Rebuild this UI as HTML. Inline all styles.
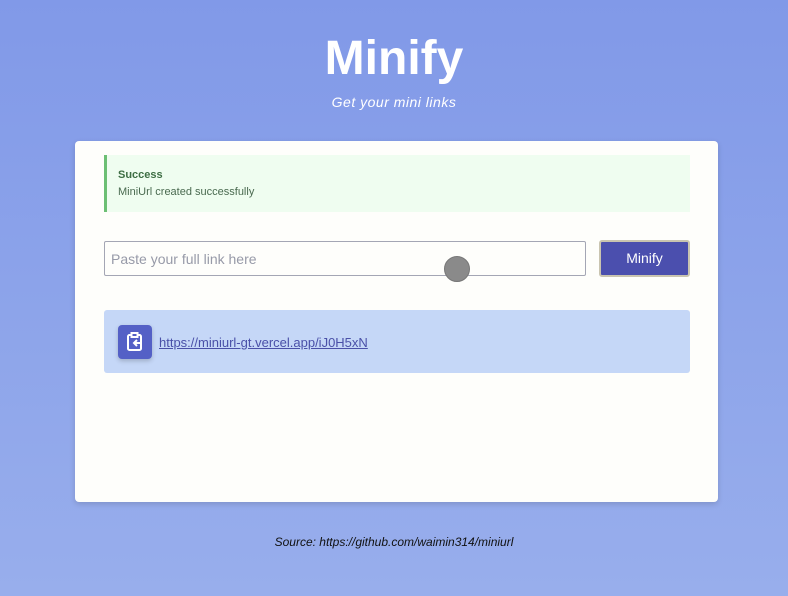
<!DOCTYPE html>
<html><head><style>
*{margin:0;padding:0;box-sizing:border-box}
body{width:788px;height:596px;overflow:hidden;background:linear-gradient(#8199e8,#98aeec);font-family:"Liberation Sans",sans-serif;position:relative}
h1{position:absolute;top:31px;width:100%;text-align:center;color:#fff;font-size:48px;font-weight:bold;letter-spacing:0}
.sub{position:absolute;top:94px;width:100%;text-align:center;color:#fff;font-style:italic;font-size:14px;letter-spacing:.5px}
.card{position:absolute;left:75px;top:141px;width:643px;height:361px;background:#fefefb;border-radius:4px;box-shadow:0 2px 6px rgba(0,0,0,.15)}
.alert{position:absolute;left:29px;top:14px;width:586px;height:57px;background:#effdf0;border-left:3px solid #6cbf74}
.alert b{position:absolute;left:11px;top:14px;font-size:11px;color:#3e6e44}
.alert span{position:absolute;left:11px;top:31px;font-size:11px;color:#4a6a50}
.inp{position:absolute;left:29px;top:100px;width:482px;height:35px;border:1px solid #a4a6b4;border-radius:2px;padding:9px 6px;color:#979aa8;font-size:14px}
.btn{position:absolute;left:524px;top:99px;width:91px;height:37px;background:#4b4fae;border:2px solid #c9c4b0;border-radius:3px;color:#fff;font-size:14px;text-align:center;line-height:33px}
.dot{position:absolute;left:369px;top:115px;width:26px;height:26px;border-radius:50%;background:#8a8a8a;border:1px solid #777}
.res{position:absolute;left:29px;top:169px;width:586px;height:63px;background:#c5d7f7;border-radius:3px}
.ic{position:absolute;left:14px;top:15px;width:34px;height:34px;background:#5460c6;border-radius:4px;box-shadow:0 2px 5px rgba(0,0,0,.2)}
.res a{position:absolute;left:55px;top:25px;font-size:13px;color:#4a50a8;text-decoration:underline}
.src{position:absolute;top:535px;width:100%;text-align:center;font-style:italic;font-size:12px;color:#111}
</style></head><body>
<h1>Minify</h1>
<div class="sub">Get your mini links</div>
<div class="card">
<div class="alert"><b>Success</b><span>MiniUrl created successfully</span></div>
<div class="inp">Paste your full link here</div>
<div class="btn">Minify</div>
<div class="dot"></div>
<div class="res"><div class="ic"><svg width="34" height="34" viewBox="0 0 34 34" fill="none" stroke="#fff" stroke-width="2"><rect x="10" y="10" width="13" height="15" rx="1.5"/><rect x="13.5" y="8" width="6" height="4" fill="#5460c6"/><path d="M23 18h-7m3-3l-3 3 3 3"/></svg></div><a>https://miniurl-gt.vercel.app/iJ0H5xN</a></div>
</div>
<div class="src">Source: https://github.com/waimin314/miniurl</div>
</body></html>
